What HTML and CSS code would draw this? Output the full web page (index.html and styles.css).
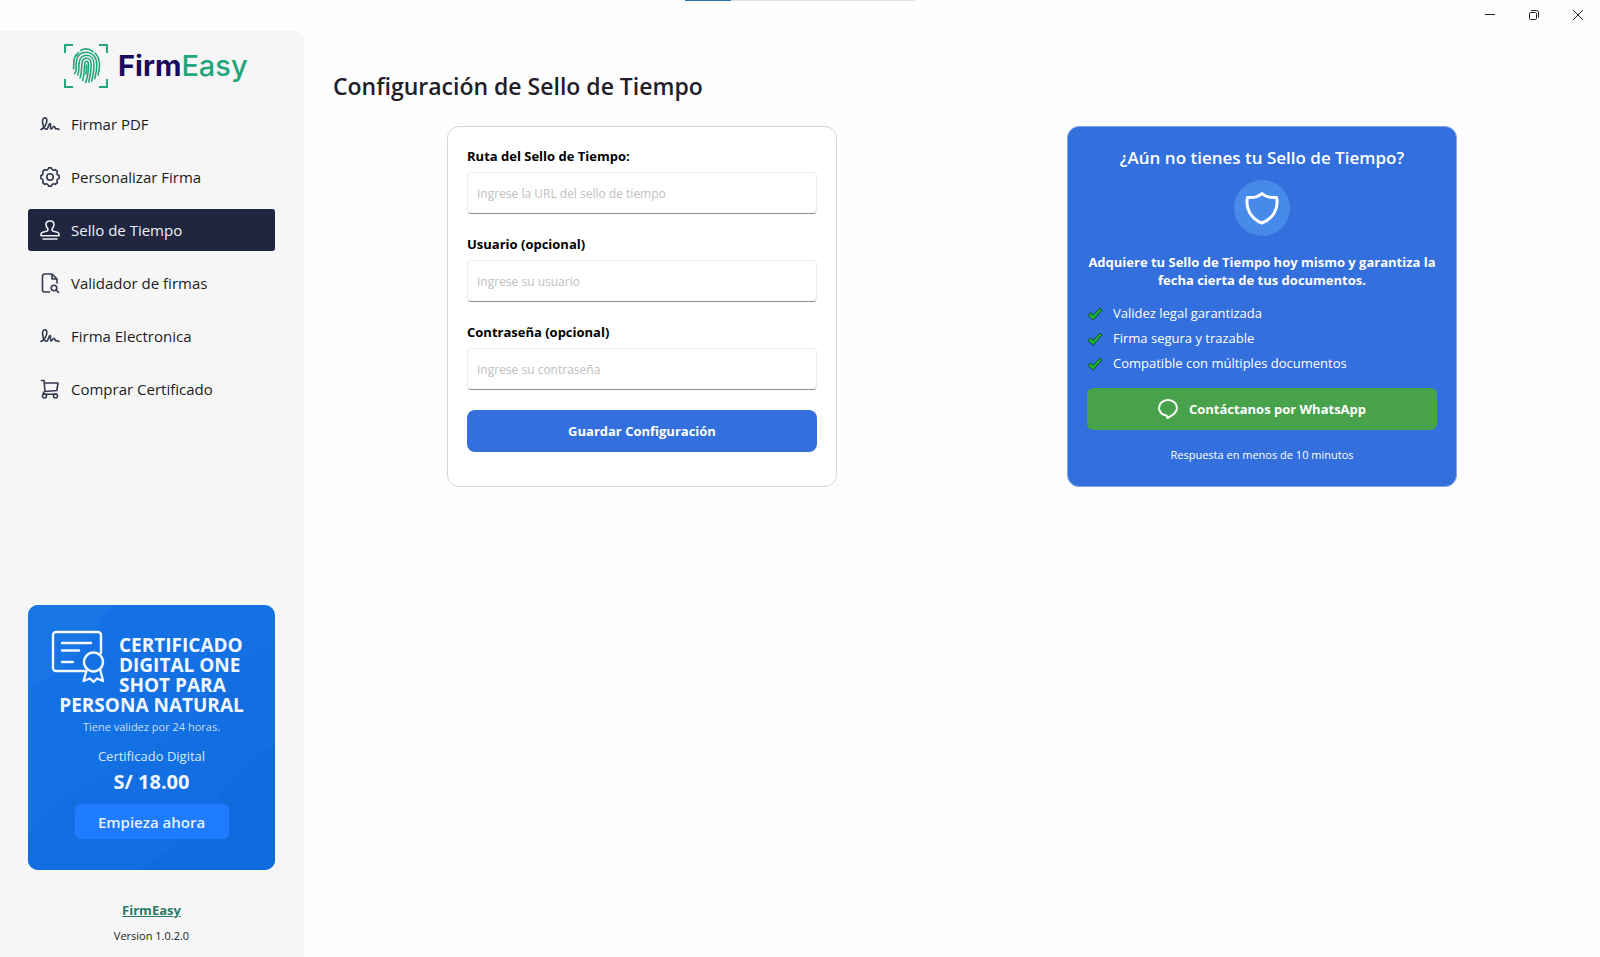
FILE: index.html
```html
<!DOCTYPE html>
<html lang="es">
<head>
    <meta charset="UTF-8">
    <meta name="viewport" content="width=device-width, initial-scale=1.0">
    <title>FirmEasy</title>
    <link rel="stylesheet" href="styles.css">
</head>
<body>
    <header class="titlebar">
        <div class="strip"><span class="strip-fill"></span></div>
        <div class="window-buttons">
            <button type="button" class="win-btn" aria-label="Minimizar">
                <svg width="10" height="10" viewBox="0 0 10 10"><path d="M0 4.500h10"/></svg>
            </button>
            <button type="button" class="win-btn" aria-label="Restaurar">
                <svg width="10" height="10" viewBox="0 0 10 10"><rect x="0.5" y="2.5" width="7" height="7" rx="1"/><path d="M2.500 0.500H7.500a2 2 0 0 1 2 2V7.500"/></svg>
            </button>
            <button type="button" class="win-btn" aria-label="Cerrar">
                <svg width="10" height="10" viewBox="0 0 10 10"><path d="M0 0l10 10M10 0L0 10"/></svg>
            </button>
        </div>
    </header>

    <div class="layout">
        <aside class="sidebar">
            <div class="logo">
                <svg class="logo-mark" width="44" height="44" viewBox="0 0 44 44">
                    <path class="corner" d="M1 9V1h8M35 1h8v8M43 35v8h-8M9 43H1v-8"/>
                    <path class="print" d="M16.500 6.500C20 4.500 25 4.500 29 7.500M12 10.500C11 12.500 9.800 15 9.800 18C9.800 21 9.600 23 9.600 25M14.500 8.500C13.500 9.500 13 10.500 12.700 11.500M31 9C34 12 35.500 16 35.500 21C35.500 25 35 28 34 31M12 27C12.500 22 11.800 20 12.400 17C13.500 11.500 17 8.300 22 8.300C28.500 8.300 32.800 13.500 32.800 20.500C32.800 26 32 30 30.800 34.500M13.700 31C15.500 27 14.500 22 15.200 18.500C16 14 18.500 11.300 22.400 11.300C27 11.300 30 15 30 20.500C30 26 29.500 31 27.700 37M16 34C18 29 17.300 24 17.900 19.500C18.300 16 20 14.300 22.500 14.300C25.500 14.300 27.200 17 27.200 20.500C27.200 27 26.500 32 24.700 38M18.500 36.500C20.500 31 20.200 25 20.600 20C20.800 18 21.400 17.200 22.500 17.200C23.800 17.200 24.500 18.500 24.500 20.500C24.500 27 23.800 33 21.600 38.500M22.500 21C22.500 24 22.500 27 22 30M10.500 29.500C11.500 28.500 11.800 28 12 27"/>
                </svg>
                <span class="logo-text"><b>Firm</b>Easy</span>
            </div>

            <nav class="menu">
                <a href="#" class="menu-item">
                    <svg viewBox="0 0 20 20"><path d="M1 15.500C4 14.300 7.200 9.800 6.800 6C6.500 3.200 3.300 3.200 2.700 6C2.100 9 3.800 15.300 6.300 15.300C8.500 15.300 8.500 9.500 10 9.500C11.300 9.500 9.800 15 11.200 15C12.500 15 12.800 12.300 14 12.300C15.200 12.300 14.700 14.900 16 14.900C16.900 14.900 18 14 19 15.600"/></svg>
                    Firmar PDF
                </a>
                <a href="#" class="menu-item">
                    <svg viewBox="0 0 20 20"><circle cx="10" cy="10" r="3.2"/><path d="M19.100 8.600V11.400Q15.900 12.400 17.400 15.400L15.400 17.400Q12.400 15.900 11.400 19.100H8.600Q7.600 15.900 4.600 17.400L2.600 15.400Q4.100 12.400 0.900 11.400V8.600Q4.100 7.600 2.600 4.600L4.600 2.600Q7.600 4.100 8.600 0.900H11.400Q12.400 4.100 15.400 2.600L17.400 4.600Q15.900 7.600 19.100 8.600Z"/></svg>
                    Personalizar Firma
                </a>
                <a href="#" class="menu-item active">
                    <svg viewBox="0 0 20 20"><path d="M3 19h14M1 15.800V14.500C1 12.800 2 12.300 3.500 12L6.500 11.300C8 10.900 8.300 9.800 7.600 8.500C7 7.400 6 6.500 6 4.600C6 2.300 7.700 1 10 1S14 2.300 14 4.600C14 6.500 13 7.400 12.400 8.500C11.700 9.800 12 10.900 13.500 11.300L16.500 12C18 12.300 19 12.800 19 14.500V15.800Z"/></svg>
                    Sello de Tiempo
                </a>
                <a href="#" class="menu-item">
                    <svg viewBox="0 0 20 20"><path d="M9.500 19H4.500A2 2 0 0 1 2.500 17V3A2 2 0 0 1 4.500 1H12L17 6V10M12 1V6H17"/><circle cx="14" cy="15" r="2.8"/><path d="M16 17L18.500 19.500"/></svg>
                    Validador de firmas
                </a>
                <a href="#" class="menu-item">
                    <svg viewBox="0 0 20 20"><path d="M1 15.500C4 14.300 7.200 9.800 6.800 6C6.500 3.200 3.300 3.200 2.700 6C2.100 9 3.800 15.300 6.300 15.300C8.500 15.300 8.500 9.500 10 9.500C11.300 9.500 9.800 15 11.200 15C12.500 15 12.800 12.300 14 12.300C15.200 12.300 14.700 14.900 16 14.900C16.900 14.900 18 14 19 15.600"/></svg>
                    Firma Electronica
                </a>
                <a href="#" class="menu-item">
                    <svg viewBox="0 0 20 20"><path d="M1.500 1.500H4L5 12.500M4.300 4H18L16.800 11.500L5 12.500C3 13 2.500 15.300 4.500 15.300H16.500"/><circle cx="4.5" cy="17" r="2"/><circle cx="15.5" cy="17" r="2"/></svg>
                    Comprar Certificado
                </a>
            </nav>

            <section class="promo">
                <svg class="promo-bg" viewBox="0 0 246 265" preserveAspectRatio="none">
                    <path class="wave-light" d="M0 0H88C62 24 50 62 0 84Z"/>
                    <path class="wave-dark" d="M246 36C190 60 180 100 130 140C90 175 30 170 0 232V265H110C160 240 190 180 246 138Z"/>
                    <path class="wave-deep" d="M110 265C160 240 190 180 246 138V265Z"/>
                </svg>
                <div class="promo-head">
                    <svg class="promo-icon" width="52" height="52" viewBox="0 0 52 52"><path d="M32 40H4a3 3 0 0 1-3-3V4a3 3 0 0 1 3-3H46a3 3 0 0 1 3 3V22M10 12H39M10 19.500H27M10 31H21"/><circle cx="41.5" cy="31" r="9.5"/><path d="M35 38L31.500 50L38 47.500L41.500 51L45 47.500L51 50L48 38"/></svg>
                    <span>CERTIFICADO<br>DIGITAL ONE<br>SHOT PARA</span>
                </div>
                <p class="promo-title">PERSONA NATURAL</p>
                <p class="promo-note">Tiene validez por 24 horas.</p>
                <p class="promo-name">Certificado Digital</p>
                <p class="promo-price">S/ 18.00</p>
                <button type="button" class="promo-btn">Empieza ahora</button>
            </section>

            <footer class="sidebar-footer">
                <a href="#">FirmEasy</a>
                <span>Version 1.0.2.0</span>
            </footer>
        </aside>

        <main class="content">
            <h1>Configuración de Sello de Tiempo</h1>
            <div class="columns">
                <form class="card form-card">
                    <div class="form-group">
                        <label for="ruta">Ruta del Sello de Tiempo:</label>
                        <input type="text" id="ruta" placeholder="Ingrese la URL del sello de tiempo">
                    </div>
                    <div class="form-group">
                        <label for="usuario">Usuario (opcional)</label>
                        <input type="text" id="usuario" placeholder="Ingrese su usuario">
                    </div>
                    <div class="form-group">
                        <label for="clave">Contraseña (opcional)</label>
                        <input type="password" id="clave" placeholder="Ingrese su contraseña">
                    </div>
                    <button type="submit" class="btn btn-save">Guardar Configuración</button>
                </form>

                <section class="card info-card">
                    <h2>¿Aún no tienes tu Sello de Tiempo?</h2>
                    <div class="shield">
                        <svg width="34" height="34" viewBox="0 0 34 34"><path d="M17 2.500C20 5.300 25.500 7 31.500 6.500C34 17 28 28 17 32C6 28 0 17 2.500 6.500C8.500 7 14 5.300 17 2.500Z"/></svg>
                    </div>
                    <p class="info-text">Adquiere tu Sello de Tiempo hoy mismo y garantiza la fecha cierta de tus documentos.</p>
                    <ul class="benefits">
                        <li><svg width="16" height="14" viewBox="0 0 16 14"><path d="M1 8L3.500 5.800L6 8.500L13 1L15 3L6.200 13Z"/></svg>Validez legal garantizada</li>
                        <li><svg width="16" height="14" viewBox="0 0 16 14"><path d="M1 8L3.500 5.800L6 8.500L13 1L15 3L6.200 13Z"/></svg>Firma segura y trazable</li>
                        <li><svg width="16" height="14" viewBox="0 0 16 14"><path d="M1 8L3.500 5.800L6 8.500L13 1L15 3L6.200 13Z"/></svg>Compatible con múltiples documentos</li>
                    </ul>
                    <button type="button" class="btn btn-whatsapp">
                        <svg width="20" height="20" viewBox="0 0 20 20"><path d="M8.500 16.500C4 16 1 12.800 1 9C1 4.500 5 1 10 1S19 4.500 19 9C19 13.500 14.500 16.500 9.500 19Z"/></svg>
                        Contáctanos por WhatsApp
                    </button>
                    <p class="info-note">Respuesta en menos de 10 minutos</p>
                </section>
            </div>
        </main>
    </div>
</body>
</html>
```
FILE: styles.css
```css
* {
    box-sizing: border-box;
}

body {
    margin: 0;
    min-height: 100vh;
    display: flex;
    flex-direction: column;
    background: #fefefe;
    color: #1f2029;
    font-family: "Open Sans", "Noto Sans", sans-serif;
    font-size: 13px;
}

h1, h2, p, ul {
    margin: 0;
    padding: 0;
}

button, input {
    font-family: inherit;
}

button {
    border: none;
    cursor: pointer;
}

svg {
    fill: none;
    stroke: currentColor;
    stroke-linecap: round;
    stroke-linejoin: round;
    flex-shrink: 0;
}

/* Title bar */
.titlebar {
    display: grid;
    grid-template-columns: 1fr 230px 1fr;
    height: 31px;
}

.strip {
    grid-column: 2;
    height: 1px;
    background: #e2e2e2;
}

.strip-fill {
    display: block;
    width: 20%;
    height: 1px;
    background: #2f6ca5;
}

.window-buttons {
    display: flex;
    justify-content: flex-end;
    height: 30px;
}

.win-btn {
    display: flex;
    align-items: center;
    justify-content: center;
    width: 44px;
    padding: 0;
    background: none;
    color: #222;
}

.layout {
    flex: 1;
    display: flex;
}

/* Sidebar */
.sidebar {
    display: flex;
    flex-direction: column;
    width: 304px;
    padding: 13px 29px 11px 28px;
    background: #f6f6f6;
    border-top-right-radius: 8px;
}

.logo {
    display: flex;
    align-items: center;
    gap: 10px;
    padding-left: 36px;
}

.corner {
    stroke: #24a67c;
    stroke-width: 2;
    stroke-linecap: butt;
    stroke-linejoin: miter;
}

.print {
    stroke: #24a67c;
    stroke-width: 1.6;
}

.logo-text {
    font-family: Inter, sans-serif;
    font-size: 29px;
    line-height: 44px;
    color: #24a67c;
    font-weight: 500;
}

.logo-text b {
    color: #190a5c;
    font-weight: 700;
}

.menu {
    display: flex;
    flex-direction: column;
    gap: 11px;
    margin-top: 15px;
}

.menu-item {
    display: flex;
    align-items: center;
    gap: 11px;
    height: 42px;
    padding-left: 12px;
    border-radius: 3px;
    color: #1c1c22;
    font-size: 15px;
    text-decoration: none;
}

.menu-item svg {
    width: 20px;
    height: 20px;
    color: #33384f;
    stroke-width: 1.6;
}

.menu-item.active,
.menu-item.active svg {
    background: #20263f;
    color: #f0f1f5;
}

.promo {
    position: relative;
    display: flex;
    flex-direction: column;
    align-items: center;
    margin-top: auto;
    padding: 26px 0 31px;
    border-radius: 10px;
    overflow: hidden;
    background: #1471e3;
    color: #f1f7ff;
    text-align: center;
}

.promo > * {
    position: relative;
}

.promo .promo-bg {
    position: absolute;
    inset: 0;
    width: 100%;
    height: 100%;
    stroke: none;
}

.wave-light {
    fill: #1775e5;
}

.wave-dark {
    fill: #126ee1;
}

.wave-deep {
    fill: #106bde;
}

.promo-head {
    display: flex;
    gap: 15px;
    align-self: stretch;
    padding-left: 24px;
    text-align: left;
}

.promo-head span {
    padding-top: 4px;
}

.promo-icon {
    stroke-width: 2.4;
    overflow: visible;
}

.promo-head,
.promo-title {
    font-size: 19px;
    font-weight: 700;
    line-height: 20px;
}

.promo-note {
    margin-top: 4px;
    font-size: 11px;
    line-height: 16px;
    color: #c9defa;
}

.promo-name {
    margin-top: 12px;
    font-size: 13px;
    line-height: 18px;
    color: #d8e8fc;
}

.promo-price {
    margin-top: 4px;
    font-size: 20px;
    font-weight: 700;
    line-height: 26px;
}

.promo-btn {
    width: 154px;
    height: 35px;
    margin-top: 9px;
    border-radius: 6px;
    background: #1f7bff;
    color: #e6f1ff;
    font-size: 15px;
    font-weight: 600;
}

.sidebar-footer {
    display: flex;
    flex-direction: column;
    align-items: center;
    gap: 6px;
    margin-top: 30px;
    color: #222;
    font-size: 11px;
    line-height: 20px;
}

.sidebar-footer a {
    color: #2b7a68;
    font-size: 13px;
    font-weight: 700;
}

/* Main content */
.content {
    flex: 1;
    padding: 39px 28px;
}

h1 {
    padding-left: 1px;
    font-size: 23px;
    font-weight: 600;
    line-height: 32px;
}

.columns {
    display: grid;
    grid-template-columns: 1fr 1fr;
    justify-items: center;
    margin-top: 24px;
}

.card {
    width: 100%;
    max-width: 390px;
    min-height: 361px;
    padding: 19px;
    border: 1px solid #d6d6d6;
    border-radius: 12px;
}

.form-card {
    display: flex;
    flex-direction: column;
    gap: 20px;
    background: #fff;
}

.form-group label {
    display: block;
    margin-bottom: 6px;
    color: #000;
    font-weight: 700;
    line-height: 20px;
}

.form-group input {
    display: block;
    width: 100%;
    height: 42px;
    padding: 0 9px;
    border: 1px solid #ededed;
    border-bottom-color: #8f8f8f;
    border-radius: 4px;
    background: #fff;
    font-size: 12px;
    outline: none;
}

.form-group input::placeholder {
    color: #c0c0c0;
}

.btn {
    width: 100%;
    height: 42px;
    border-radius: 8px;
    color: #fff;
    font-size: 13px;
    font-weight: 700;
}

.btn-save {
    background: #336fdd;
}

.info-card {
    border-color: #7fa5ea;
    background: #336fdd;
    color: #fff;
    text-align: center;
}

.info-card h2 {
    font-size: 17px;
    font-weight: 600;
    line-height: 24px;
}

.shield {
    display: flex;
    align-items: center;
    justify-content: center;
    width: 56px;
    height: 56px;
    margin: 10px auto 17px;
    border-radius: 50%;
    background: #478ae9;
    stroke-width: 3;
}

.info-text {
    font-weight: 700;
    line-height: 18px;
}

.benefits {
    margin-top: 12px;
    list-style: none;
}

.benefits li {
    display: flex;
    align-items: center;
    gap: 10px;
    line-height: 25px;
}

.benefits path {
    fill: #1fb825;
    stroke: #123f3b;
}

.btn-whatsapp {
    display: flex;
    align-items: center;
    justify-content: center;
    gap: 11px;
    margin-top: 12px;
    border-radius: 6px;
    background: #48a24b;
}

.btn-whatsapp svg {
    stroke-width: 2;
}

.info-note {
    margin-top: 16px;
    font-size: 11px;
    line-height: 18px;
}
```
